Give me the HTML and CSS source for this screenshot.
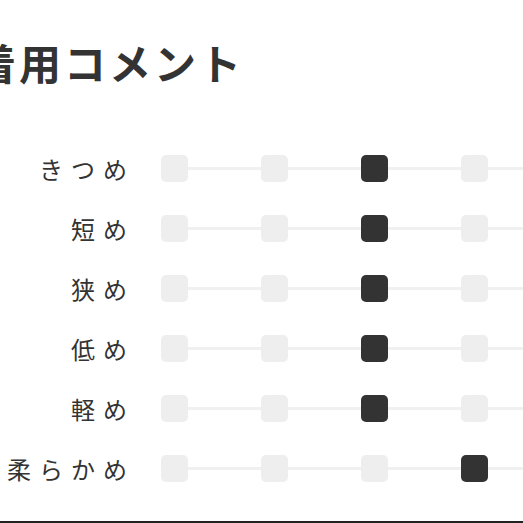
FILE: index.html
```html
<!DOCTYPE html>
<html lang="ja">
<head>
<meta charset="utf-8">
<link rel="stylesheet" href="styles.css">
</head>
<body>
<section class="fit">
  <h2 class="title">着用コメント</h2>
  <div class="rows">
    <div class="row"><span class="label">きつめ</span><div class="scale"><i class="dot"></i><i class="bar"></i><i class="dot"></i><i class="bar"></i><i class="dot on"></i><i class="bar"></i><i class="dot"></i><i class="bar"></i><i class="dot"></i></div></div>
    <div class="row"><span class="label">短め</span><div class="scale"><i class="dot"></i><i class="bar"></i><i class="dot"></i><i class="bar"></i><i class="dot on"></i><i class="bar"></i><i class="dot"></i><i class="bar"></i><i class="dot"></i></div></div>
    <div class="row"><span class="label">狭め</span><div class="scale"><i class="dot"></i><i class="bar"></i><i class="dot"></i><i class="bar"></i><i class="dot on"></i><i class="bar"></i><i class="dot"></i><i class="bar"></i><i class="dot"></i></div></div>
    <div class="row"><span class="label">低め</span><div class="scale"><i class="dot"></i><i class="bar"></i><i class="dot"></i><i class="bar"></i><i class="dot on"></i><i class="bar"></i><i class="dot"></i><i class="bar"></i><i class="dot"></i></div></div>
    <div class="row"><span class="label">軽め</span><div class="scale"><i class="dot"></i><i class="bar"></i><i class="dot"></i><i class="bar"></i><i class="dot on"></i><i class="bar"></i><i class="dot"></i><i class="bar"></i><i class="dot"></i></div></div>
    <div class="row"><span class="label">柔らかめ</span><div class="scale"><i class="dot"></i><i class="bar"></i><i class="dot"></i><i class="bar"></i><i class="dot"></i><i class="bar"></i><i class="dot on"></i><i class="bar"></i><i class="dot"></i></div></div>
  </div>
</section>
</body>
</html>
```

FILE: styles.css
```css
html, body {
  margin: 0;
  padding: 0;
  background: #fff;
  overflow: hidden;
  width: 523px;
  height: 523px;
}
body {
  font-family: "Noto Sans CJK JP", "Noto Sans", sans-serif;
  color: #333;
}
.fit {
  width: 700px;
  border-bottom: 2px solid #222;
  padding-top: 36px;
  padding-bottom: 23px;
}
.title {
  margin: 0 0 0 -26px;
  font-size: 42px;
  line-height: 52px;
  font-weight: 700;
  letter-spacing: 3px;
  color: #333;
}
.rows {
  margin-top: 50px;
  display: flex;
  flex-direction: column;
}
.row {
  height: 60px;
  display: grid;
  grid-template-columns: 135px auto;
  column-gap: 26px;
  align-items: center;
}
.label {
  text-align: right;
  font-size: 24px;
  letter-spacing: 8px;
  font-weight: 400;
  color: #333;
  white-space: nowrap;
}
.scale {
  display: flex;
  align-items: center;
}
.dot {
  width: 27px;
  height: 27px;
  border-radius: 5px;
  background: #eeeeee;
  flex: none;
}
.dot.on {
  background: #333;
}
.bar {
  width: 73px;
  height: 3px;
  background: #f0f0f0;
  flex: none;
}
```
